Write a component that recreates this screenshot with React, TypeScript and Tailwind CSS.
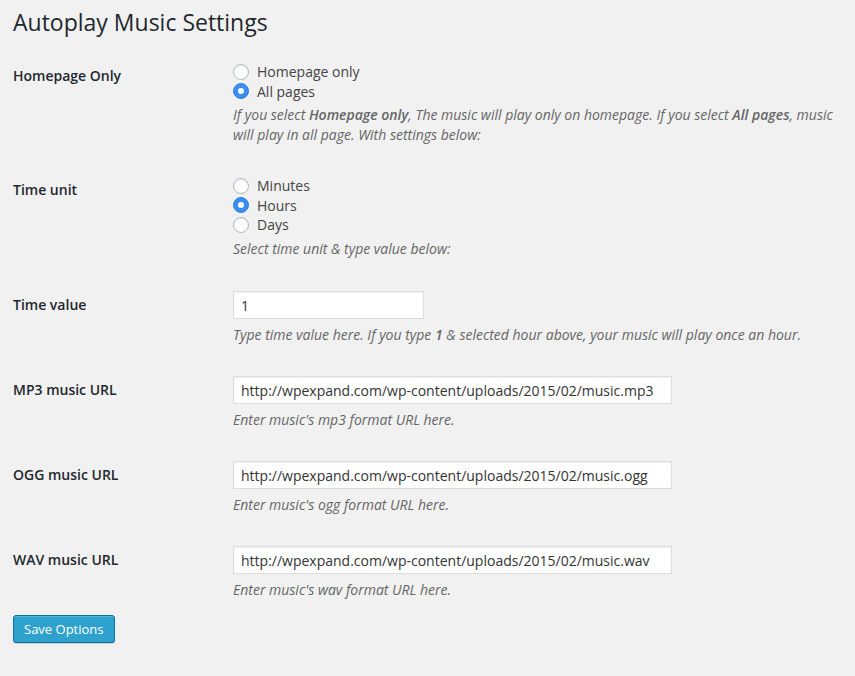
import { useState } from "react";

function Radio({ checked, label, onClick }: { checked: boolean; label: string; onClick: () => void }) {
  return (
    <label onClick={onClick} className="flex items-center h-[19.5px] cursor-pointer">
      {checked ? (
        <span className="w-[16px] h-[16px] rounded-full bg-[#3a8ef3] border border-[#2f7fe0] flex items-center justify-center">
          <span className="w-[6px] h-[6px] rounded-full bg-white" />
        </span>
      ) : (
        <span className="w-[16px] h-[16px] rounded-full bg-white border border-[#b4b9be] shadow-[inset_0_1px_2px_rgba(0,0,0,0.1)]" />
      )}
      <span className="ml-[8px] text-[14px] text-[#444]">{label}</span>
    </label>
  );
}

function Row({ label, children, className }: { label: string; children: React.ReactNode; className: string }) {
  return (
    <div className={`flex ${className}`}>
      <div className="w-[220px] shrink-0 pt-[20px] text-[14px] leading-[18px] font-semibold text-[#23282d]">{label}</div>
      <div className="flex-1 pt-[15px] pr-[10px]">{children}</div>
    </div>
  );
}

function Desc({ children, className = "" }: { children: React.ReactNode; className?: string }) {
  return <p className={`text-[14px] leading-[19.5px] italic text-[#666] ${className}`}>{children}</p>;
}

export default function App() {
  const [scope, setScope] = useState("all");
  const [unit, setUnit] = useState("hours");
  const [value, setValue] = useState("1");
  const [mp3, setMp3] = useState("http://wpexpand.com/wp-content/uploads/2015/02/music.mp3");
  const [ogg, setOgg] = useState("http://wpexpand.com/wp-content/uploads/2015/02/music.ogg");
  const [wav, setWav] = useState("http://wpexpand.com/wp-content/uploads/2015/02/music.wav");

  const inputCls =
    "block h-[28px] bg-white border border-[#ddd] shadow-[inset_0_1px_2px_rgba(0,0,0,0.07)] px-[7px] text-[14px] text-[#333] outline-none";

  return (
    <div className="min-h-screen w-full bg-[#f1f1f1] pl-[13px] pt-[8px] pb-[20px]" style={{ fontFamily: '"Open Sans", "Liberation Sans", sans-serif' }}>
      <h1 className="text-[23px] leading-[29px] font-normal text-[#23282d]">Autoplay Music Settings</h1>

      <Row label="Homepage Only" className="mt-[10px] pb-[17px]">
        <Radio checked={scope === "home"} label="Homepage only" onClick={() => setScope("home")} />
        <Radio checked={scope === "all"} label="All pages" onClick={() => setScope("all")} />
        <Desc className="mt-[4px]">
          If you select <b className="font-semibold">Homepage only</b>, The music will play only on homepage. If you select{" "}
          <b className="font-semibold">All pages</b>, music will play in all page. With settings below:
        </Desc>
      </Row>

      <Row label="Time unit" className="pb-[18px]">
        <Radio checked={unit === "minutes"} label="Minutes" onClick={() => setUnit("minutes")} />
        <Radio checked={unit === "hours"} label="Hours" onClick={() => setUnit("hours")} />
        <Radio checked={unit === "days"} label="Days" onClick={() => setUnit("days")} />
        <Desc className="mt-[4px]">Select time unit &amp; type value below:</Desc>
      </Row>

      <Row label="Time value" className="pb-[16.5px]">
        <input value={value} onChange={(e) => setValue(e.target.value)} className={`${inputCls} w-[191px]`} />
        <Desc className="mt-[6px]">
          Type time value here. If you type <b className="font-semibold">1</b> &amp; selected hour above, your music will play once an hour.
        </Desc>
      </Row>

      <Row label="MP3 music URL" className="pb-[16.5px]">
        <input value={mp3} onChange={(e) => setMp3(e.target.value)} className={`${inputCls} w-[439px]`} />
        <Desc className="mt-[6px]">Enter music's mp3 format URL here.</Desc>
      </Row>

      <Row label="OGG music URL" className="pb-[16.5px]">
        <input value={ogg} onChange={(e) => setOgg(e.target.value)} className={`${inputCls} w-[439px]`} />
        <Desc className="mt-[6px]">Enter music's ogg format URL here.</Desc>
      </Row>

      <Row label="WAV music URL" className="pb-[15px]">
        <input value={wav} onChange={(e) => setWav(e.target.value)} className={`${inputCls} w-[439px]`} />
        <Desc className="mt-[6px]">Enter music's wav format URL here.</Desc>
      </Row>

      <button className="h-[28px] px-[10px] pb-[1px] rounded-[3px] bg-[#2ea2cc] border border-[#0074a2] text-white text-[13px] leading-[26px] shadow-[inset_0_1px_0_rgba(120,200,230,0.5),0_1px_0_rgba(0,0,0,0.15)]">
        Save Options
      </button>
    </div>
  );
}
